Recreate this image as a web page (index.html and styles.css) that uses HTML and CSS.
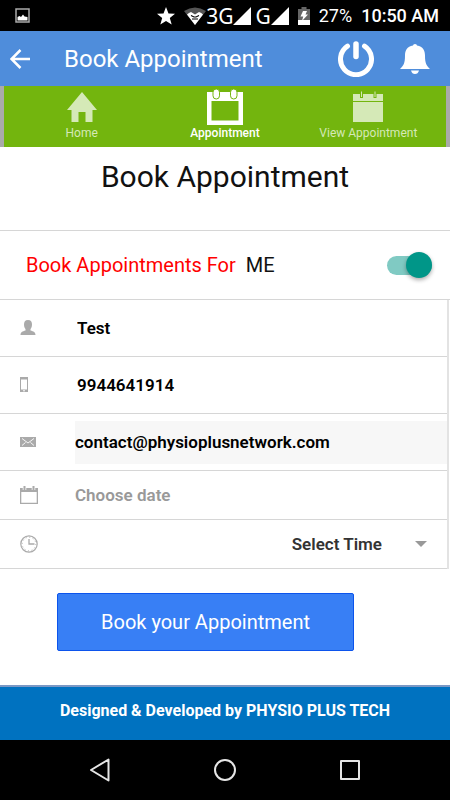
FILE: index.html
```html
<!DOCTYPE html>
<html lang="en">
<head>
<meta charset="utf-8">
<meta name="viewport" content="width=device-width, initial-scale=1">
<title>Book Appointment</title>
<link rel="stylesheet" href="styles.css">
</head>
<body>
<div class="screen">
  <div class="status">
    <svg class="status-picture" width="16" height="16" viewBox="0 0 16 16"><rect x="1" y="1" width="13" height="13" fill="none" stroke="#aaa" stroke-width="1.5"/><path d="M2.500 12.500V9l2-1 1.500 1 2-2.500 1.500 2 3 .5v3.500z" fill="#fff"/></svg>
    <svg width="18" height="18" viewBox="0 0 18 18"><path d="M9 0l2.500 6.500 6.500.3-5.200 4.200 1.900 6.500L9 13.900l-5.700 3.600 1.900-6.500L0 6.800l6.500-.3z" fill="#fff"/></svg>
    <div class="signals">
      <svg width="22" height="18" viewBox="0 0 22 18"><path d="M0 4Q11-3 22 4L11 18z" fill="#555"/><path d="M3 7.500Q5 5.500 7 5l4 2.500L15 5q2.500.5 4 2.500L11 18z" fill="#fff"/><path d="M7 8.500l3 1.500h2l3-1.500M8 12h6" fill="none" stroke="#000" stroke-width="1.100"/></svg>
      <span class="network">3G</span>
      <svg width="18" height="18" viewBox="0 0 18 18"><path d="M18 0v18H0z" fill="#fff"/></svg>
      <span class="network second">G</span>
      <svg width="18" height="18" viewBox="0 0 18 18"><path d="M18 0v18H0z" fill="#fff"/></svg>
    </div>
    <svg width="12" height="18" viewBox="0 0 12 18"><path d="M3.500 0h5v2H12v16H0V2h3.500z" fill="#666"/><path d="M0 13h12v5H0z" fill="#fff"/><path d="M5 4h4L7.500 7.500H10L4 14l1.200-4.500H2.500z" fill="#fff"/></svg>
    <span class="battery">27%</span>
    <span class="clock">10:50 AM</span>
  </div>

  <header class="appbar">
    <button class="icon-button" aria-label="Back"><svg width="20" height="20" viewBox="0 0 20 20"><path d="M20 10H2M10.500 1L1.500 10l9 9" fill="none" stroke="#fff" stroke-width="2.500"/></svg></button>
    <span class="appbar-title">Book Appointment</span>
    <button class="icon-button" aria-label="Log out"><svg width="36" height="36" viewBox="0 0 36 36"><path d="M9.500 5.200A15.500 15.500 0 1 0 26.500 5.200" fill="none" stroke="#fff" stroke-width="5" stroke-linecap="round"/><path d="M18 3v12.500" stroke="#fff" stroke-width="5.500" stroke-linecap="round"/></svg></button>
    <button class="icon-button" aria-label="Notifications"><svg width="30" height="32" viewBox="0 0 30 32"><path d="M13 2.500q0-1.500 2-1.500t2 1.500c6 1 8 5 8 10 0 8 1.500 10 5 13.500H0c3.500-3.500 5-5.500 5-13.500 0-5 2-9 8-10zM11 27.500h8q-1 3.500-4 3.500t-4-3.500z" fill="#fff"/></svg></button>
  </header>

  <nav class="tabs">
    <a class="tab" href="#home"><svg width="32" height="36" viewBox="0 0 32 36"><path d="M16 3l15 18h-4.500v12h-7V23h-7v10h-7V21H1z" fill="currentColor"/></svg><span>Home</span></a>
    <a class="tab active" href="#appointment" aria-current="page"><svg width="36" height="36" viewBox="0 0 36 36"><path d="M0 3h36v33H0zM4.500 12v19.500h27V12z" fill="currentColor" fill-rule="evenodd"/><rect x="6" y="0" width="6.500" height="10" rx="3.200" fill="currentColor" stroke="#73b50e"/><rect x="23.500" y="0" width="6.500" height="10" rx="3.200" fill="currentColor" stroke="#73b50e"/></svg><span>Appointment</span></a>
    <a class="tab" href="#view"><svg width="32" height="36" viewBox="0 0 32 36"><path d="M1 5h30v7H1zM1 13h30v20H1z" fill="currentColor"/><path d="M9.500 3v6M23 3v6" stroke="#73b50e" stroke-width="3"/><path d="M9.500 2.500V8M23 2.500V8" stroke="currentColor" stroke-width="1"/></svg><span>View Appointment</span></a>
  </nav>

  <main class="content">
    <h1 class="heading">Book Appointment</h1>
    <form>
      <label class="toggle-row">
        <span class="toggle-label">Book Appointments For</span>
        <span class="toggle-value">ME</span>
        <input class="switch" type="checkbox" role="switch" checked>
      </label>
      <div class="fields">
        <div class="field">
          <label for="name" aria-label="Name"><svg width="18" height="18" viewBox="0 0 18 18"><path d="M8 1c3 0 4 1.800 4 4.500S11 9.500 10.500 10v1.500c3 1 5 1.500 5 4.500H.5c0-3 2-3.500 5-4.500V10C5 9.500 4 8.200 4 5.500S5 1 8 1z" fill="#aaa"/></svg></label>
          <input id="name" type="text" value="Test">
        </div>
        <div class="field">
          <label for="phone" aria-label="Phone"><svg width="18" height="18" viewBox="0 0 18 18"><path d="M0 1h8v15H0zM1 3.500v10h6v-10z" fill="#aaa" fill-rule="evenodd"/><path d="M3 14.800h2" stroke="#fff"/></svg></label>
          <input id="phone" type="tel" value="9944641914">
        </div>
        <div class="field">
          <label for="email" aria-label="Email"><svg width="18" height="18" viewBox="0 0 18 18"><path d="M0 4h16v10H0z" fill="#aaa"/><path d="M2 5.500l6 4.500 6-4.500M2 12.500L5.500 9.500M14 12.500L10.500 9.500" fill="none" stroke="#fff" stroke-width=".9"/></svg></label>
          <input id="email" class="filled" type="email" value="contact@physioplusnetwork.com">
        </div>
        <div class="field short">
          <label for="date" aria-label="Date"><svg width="18" height="18" viewBox="0 0 18 18"><path d="M0 2h18v16H0zM1.300 6v10.700h15.400V6z" fill="#aaa" fill-rule="evenodd"/><path d="M4.500 0v4M13.500 0v4" stroke="#fff" stroke-width="3.500"/><path d="M4.500 0v4M13.500 0v4" stroke="#aaa" stroke-width="2"/></svg></label>
          <input id="date" type="text" placeholder="Choose date">
        </div>
        <div class="field short">
          <label for="time" aria-label="Time"><svg width="18" height="18" viewBox="0 0 18 18"><circle cx="9" cy="9" r="8.200" fill="none" stroke="#aaa" stroke-width="1.200"/><path d="M9 4v5h5.500" fill="none" stroke="#aaa" stroke-width="1.300"/><circle cx="9" cy="9" r="6.800" fill="none" stroke="#aaa" stroke-dasharray="1 2.560"/></svg></label>
          <select id="time"><option>Select Time</option></select>
          <svg class="caret" width="12" height="6" viewBox="0 0 12 6"><path d="M0 0h12L6 6z" fill="#999"/></svg>
        </div>
      </div>
      <button class="submit" type="submit">Book your Appointment</button>
    </form>
  </main>

  <footer class="footer">Designed &amp; Developed by PHYSIO PLUS TECH</footer>
  <div class="navbar">
    <button class="icon-button" aria-label="Back"><svg width="24" height="24" viewBox="0 0 24 24"><path d="M20.500 1.500v21L3 12z" fill="none" stroke="#e6e6e6" stroke-width="2" stroke-linejoin="round"/></svg></button>
    <button class="icon-button" aria-label="Home"><svg width="24" height="24" viewBox="0 0 24 24"><circle cx="12" cy="12" r="10" fill="none" stroke="#e6e6e6" stroke-width="2"/></svg></button>
    <button class="icon-button" aria-label="Recent apps"><svg width="24" height="24" viewBox="0 0 24 24"><rect x="3" y="3" width="18" height="18" fill="none" stroke="#e6e6e6" stroke-width="2" stroke-linejoin="round"/></svg></button>
  </div>
</div>
</body>
</html>
```
FILE: styles.css
```css
* {
  box-sizing: border-box;
}

body {
  margin: 0;
  font-family: Roboto, sans-serif;
  color: #111;
  background: #fff;
}

svg {
  display: block;
  flex: none;
}

.screen {
  display: flex;
  flex-direction: column;
  min-height: 100vh;
}

.status {
  display: flex;
  align-items: center;
  gap: 9px;
  height: 31px;
  padding: 0 11px 0 15px;
  background: #000;
  color: #fff;
  font-size: 18px;
  line-height: 24px;
}

.status-picture {
  margin-right: auto;
}

.signals {
  display: flex;
  align-items: center;
}

.network {
  font-family: "Noto Sans", sans-serif;
  font-size: 21px;
}

.second {
  margin-left: 4px;
}

.clock {
  font-weight: 500;
}

.icon-button {
  padding: 0;
  border: 0;
  background: none;
}

.appbar {
  display: flex;
  align-items: center;
  height: 55px;
  padding: 0 20px 0 10px;
  gap: 26px;
  background: #4f8ddb;
  color: #fff;
}

.appbar-title {
  flex: 1;
  padding-left: 8px;
  font-size: 24px;
  line-height: 32px;
}

.tabs {
  display: grid;
  grid-template-columns: repeat(3, 1fr);
  height: 61px;
  padding: 3px 6px 0;
  border-left: 4px solid #aaa;
  border-right: 4px solid #aaa;
  background: #73b50e;
}

.tab {
  display: flex;
  flex-direction: column;
  align-items: center;
  color: #d5e9b7;
  font-size: 12px;
  line-height: 16px;
  text-decoration: none;
  white-space: nowrap;
}

.active {
  color: #fff;
  font-weight: 500;
}

.content {
  flex: 1;
}

.heading {
  margin: 0;
  padding: 10px 0 33px;
  border-bottom: 1px solid #d6d6d6;
  font-size: 30px;
  font-weight: 400;
  line-height: 40px;
  text-align: center;
}

.toggle-row {
  display: flex;
  align-items: center;
  gap: 10px;
  height: 69px;
  padding: 0 18px 0 26px;
  border-bottom: 1px solid #d6d6d6;
  font-size: 20px;
  line-height: 24px;
}

.toggle-label {
  color: #f00;
}

.switch {
  display: flex;
  align-items: center;
  justify-content: flex-end;
  appearance: none;
  width: 45px;
  height: 19px;
  margin: 0 0 0 auto;
  border-radius: 10px;
  background: #80cac3;
}

.switch::before {
  content: "";
  flex: none;
  width: 26px;
  height: 26px;
  border-radius: 50%;
  background: #009688;
  box-shadow: 0 2px 4px #0005;
}

.fields {
  margin-right: 1px;
  border-right: 2px solid #e3e3e3;
}

.field {
  display: flex;
  align-items: center;
  height: 57px;
  padding-left: 20px;
  border-bottom: 1px solid #d6d6d6;
}

.field.short {
  height: 49px;
}

.field label {
  flex: none;
  width: 55px;
}

.field input,
.field select {
  flex: 1;
  min-width: 0;
  height: 43px;
  padding: 0;
  border: 0;
  outline: 0;
  background: none;
  color: #000;
  font: 600 17px/24px Roboto, sans-serif;
}

#name,
#phone {
  padding-left: 2px;
}

.field .filled {
  background: #f7f7f7;
}

.field input::placeholder {
  color: #999;
  opacity: 1;
}

.field select {
  appearance: none;
  color: #333;
  text-align: right;
  text-align-last: right;
}

.caret {
  margin: 0 20px 0 33px;
}

.submit {
  display: block;
  width: 66%;
  height: 58px;
  margin: 24px 0 24px 57px;
  padding: 0;
  border: 1px solid #0c54ec;
  border-radius: 2px;
  background: #387ff5;
  color: #fff;
  font: 400 20px/24px Roboto, sans-serif;
}

.footer {
  height: 55px;
  padding-top: 12px;
  border-top: 2px solid #7b98c5;
  background: #0072c0;
  color: #fff;
  font-size: 16px;
  font-weight: 700;
  line-height: 24px;
  text-align: center;
}

.navbar {
  display: flex;
  align-items: center;
  justify-content: center;
  gap: 101px;
  height: 60px;
  background: #000;
}
```
